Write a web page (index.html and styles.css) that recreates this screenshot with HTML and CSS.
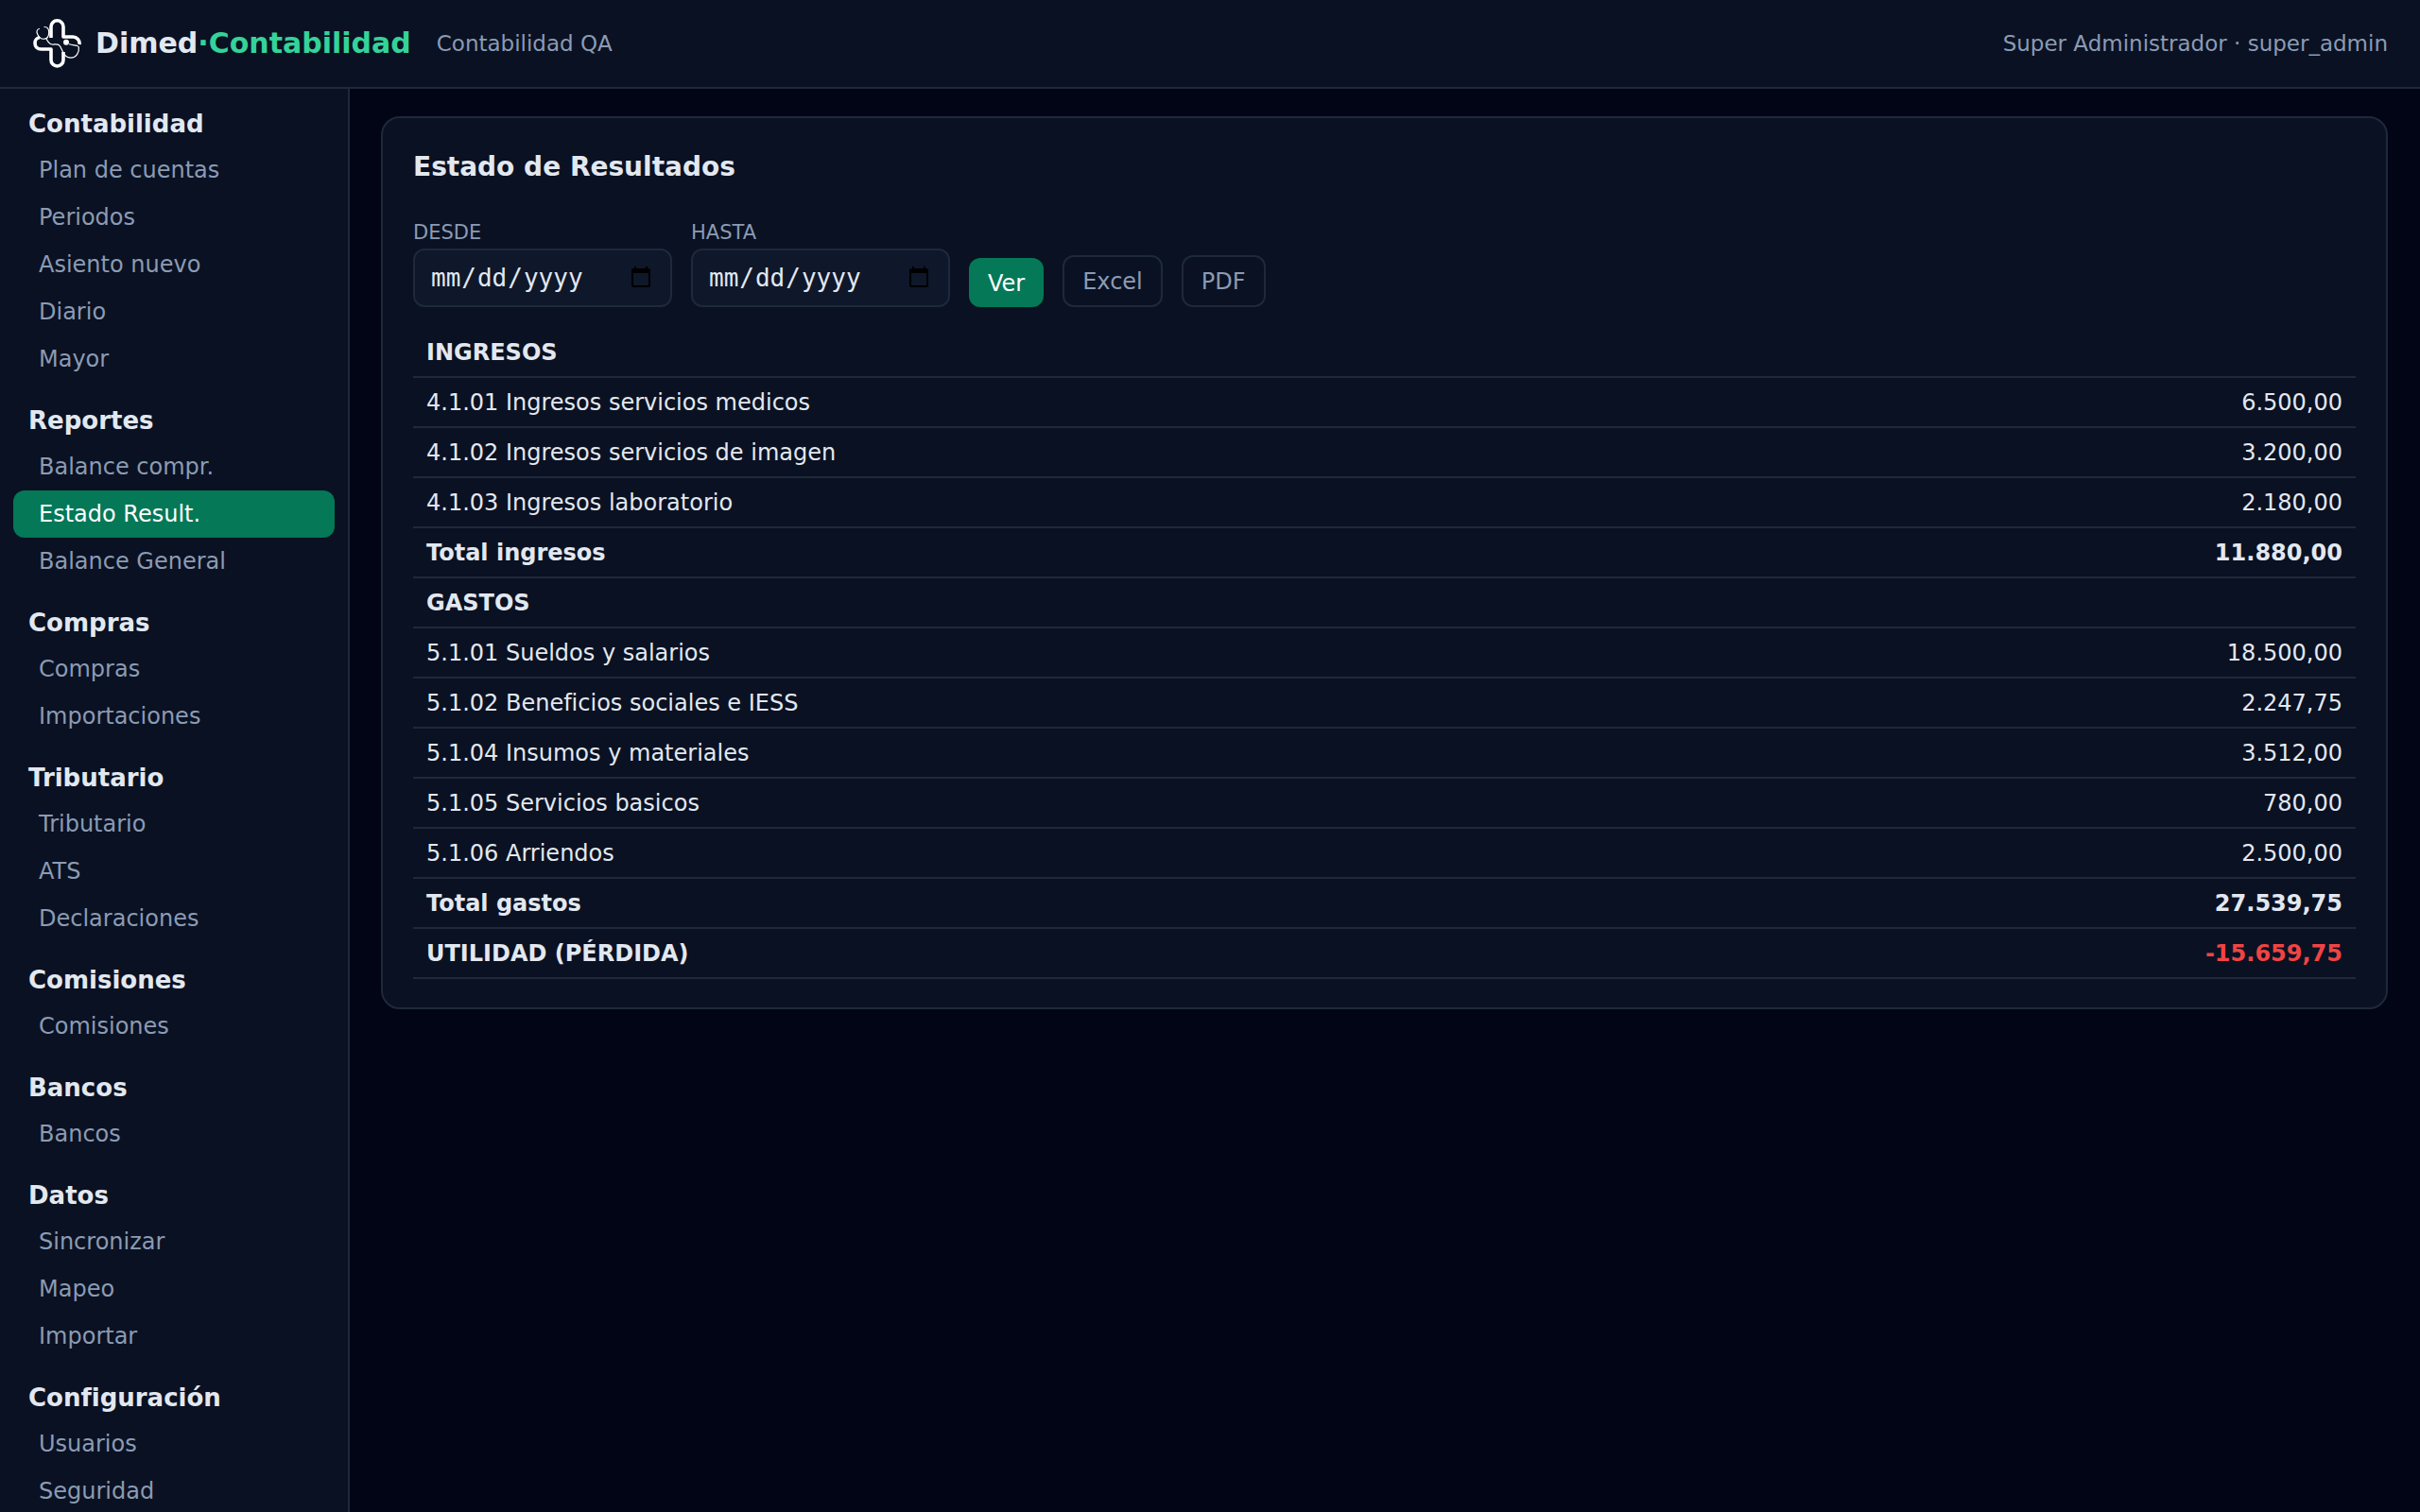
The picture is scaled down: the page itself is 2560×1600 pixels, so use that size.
FILE: index.html
```html
<!DOCTYPE html>
<html lang="es">
<head>
<meta charset="UTF-8">
<meta name="viewport" content="width=device-width, initial-scale=1">
<title>Estado de Resultados - Dimed·Contabilidad</title>
<link rel="stylesheet" href="styles.css">
</head>
<body>
<header class="topbar">
  <svg class="logo" viewBox="0 0 52 52" fill="none" stroke="#fff" stroke-linecap="round" stroke-linejoin="round" aria-hidden="true">
    <path stroke-width="3.6" stroke-linecap="butt" d="M20 20V8.300a6.500 6.500 0 0 1 13 0V19H43a7 7 0 0 1 7 8"/>
    <path stroke-width="3.6" stroke-linecap="butt" d="M8 19.800C5 20 3 22.500 3 25.500c0 4 2.500 6.500 6.500 6.500H20v11.500a6.500 6.500 0 0 0 13 0V35"/>
    <path stroke-width="1.200" d="M7.500 10.500C4.500 11 4.500 14 5.800 16.500 7.500 20 10 21.600 13 21.200c3.500-.5 4.700-4 4.700-7 0-3.500-1.200-5.700-4.700-5.700"/>
    <path stroke-width="1.200" d="M15 21c1.500 3 3 5.500 6 6 2.500.4 5-1 7.500.8 3.500 2.500 3.500 13.400 12.500 13.400 6 0 9-6.500 8.300-11.200-.6-3-6-1.500-10-3.200"/>
    <circle cx="36" cy="24.800" r="3" fill="#fff" stroke="none"/>
  </svg>
  <div class="brand">Dimed<span class="brand-accent">·Contabilidad</span></div>
  <div class="company">Contabilidad QA</div>
  <div class="user">Super Administrador · super_admin</div>
</header>

<div class="layout">
  <nav class="sidebar">
    <div class="group">
      <h2>Contabilidad</h2>
      <a href="#">Plan de cuentas</a>
      <a href="#">Periodos</a>
      <a href="#">Asiento nuevo</a>
      <a href="#">Diario</a>
      <a href="#">Mayor</a>
    </div>
    <div class="group">
      <h2>Reportes</h2>
      <a href="#">Balance compr.</a>
      <a href="#" class="active">Estado Result.</a>
      <a href="#">Balance General</a>
    </div>
    <div class="group">
      <h2>Compras</h2>
      <a href="#">Compras</a>
      <a href="#">Importaciones</a>
    </div>
    <div class="group">
      <h2>Tributario</h2>
      <a href="#">Tributario</a>
      <a href="#">ATS</a>
      <a href="#">Declaraciones</a>
    </div>
    <div class="group">
      <h2>Comisiones</h2>
      <a href="#">Comisiones</a>
    </div>
    <div class="group">
      <h2>Bancos</h2>
      <a href="#">Bancos</a>
    </div>
    <div class="group">
      <h2>Datos</h2>
      <a href="#">Sincronizar</a>
      <a href="#">Mapeo</a>
      <a href="#">Importar</a>
    </div>
    <div class="group">
      <h2>Configuración</h2>
      <a href="#">Usuarios</a>
      <a href="#">Seguridad</a>
    </div>
  </nav>

  <main class="content">
    <section class="card">
      <h1>Estado de Resultados</h1>
      <form class="filters">
        <div class="field">
          <label for="desde">DESDE</label>
          <input type="date" id="desde" name="desde">
        </div>
        <div class="field">
          <label for="hasta">HASTA</label>
          <input type="date" id="hasta" name="hasta">
        </div>
        <button type="submit" class="btn">Ver</button>
        <button type="button" class="btn btn-outline">Excel</button>
        <button type="button" class="btn btn-outline">PDF</button>
      </form>
      <table class="report">
        <tbody>
          <tr class="strong"><td colspan="2">INGRESOS</td></tr>
          <tr><td>4.1.01 Ingresos servicios medicos</td><td class="num">6.500,00</td></tr>
          <tr><td>4.1.02 Ingresos servicios de imagen</td><td class="num">3.200,00</td></tr>
          <tr><td>4.1.03 Ingresos laboratorio</td><td class="num">2.180,00</td></tr>
          <tr class="strong"><td>Total ingresos</td><td class="num">11.880,00</td></tr>
          <tr class="strong"><td colspan="2">GASTOS</td></tr>
          <tr><td>5.1.01 Sueldos y salarios</td><td class="num">18.500,00</td></tr>
          <tr><td>5.1.02 Beneficios sociales e IESS</td><td class="num">2.247,75</td></tr>
          <tr><td>5.1.04 Insumos y materiales</td><td class="num">3.512,00</td></tr>
          <tr><td>5.1.05 Servicios basicos</td><td class="num">780,00</td></tr>
          <tr><td>5.1.06 Arriendos</td><td class="num">2.500,00</td></tr>
          <tr class="strong"><td>Total gastos</td><td class="num">27.539,75</td></tr>
          <tr class="strong"><td>UTILIDAD (PÉRDIDA)</td><td class="num negative">-15.659,75</td></tr>
        </tbody>
      </table>
    </section>
  </main>
</div>
</body>
</html>
```
FILE: styles.css
```css
:root {
  --bg: #020515;
  --panel: #0a1122;
  --field: #0f172a;
  --line: #1e293b;
  --text: #e2e8f0;
  --muted: #8b9bb4;
  --green: #047857;
  --accent: #34d399;
  --red: #ef4444;
}

* {
  box-sizing: border-box;
}

body {
  margin: 0;
  height: 100vh;
  display: flex;
  flex-direction: column;
  overflow: hidden;
  background: var(--bg);
  color: var(--text);
  font-family: "DejaVu Sans", sans-serif;
  font-size: 24px;
  line-height: 36px;
}

.topbar {
  display: flex;
  align-items: center;
  flex-shrink: 0;
  height: 94px;
  padding: 0 34px;
  background: var(--panel);
  border-bottom: 2px solid var(--line);
}

.logo {
  width: 52px;
  height: 52px;
  margin-right: 15px;
}

.brand {
  font-size: 30px;
  font-weight: bold;
}

.brand-accent {
  color: var(--accent);
}

.company,
.user {
  color: var(--muted);
  font-size: 23px;
}

.company {
  margin-left: 27px;
}

.user {
  margin-left: auto;
}

.layout {
  display: flex;
  flex: 1;
  min-height: 0;
}

.sidebar {
  width: 370px;
  flex-shrink: 0;
  padding: 15px 14px;
  background: var(--panel);
  border-right: 2px solid var(--line);
  overflow: hidden;
}

.group {
  margin-bottom: 18px;
}

.group h2 {
  margin: 0;
  padding: 0 16px 2px;
  font-size: 26px;
  line-height: 44px;
}

.group a {
  display: block;
  padding: 7px 27px;
  border-radius: 12px;
  color: var(--muted);
  text-decoration: none;
}

.group a.active {
  background: var(--green);
  color: #fff;
}

.content {
  flex: 1;
  padding: 29px 34px 29px 33px;
}

.card {
  padding: 30px 32px;
  background: var(--panel);
  border: 2px solid var(--line);
  border-radius: 20px;
}

.card h1 {
  margin: 0 0 30px;
  font-size: 28px;
  line-height: 44px;
}

.filters {
  display: flex;
  align-items: flex-end;
  gap: 20px;
  margin-bottom: 22px;
}

.field {
  display: flex;
  flex-direction: column;
}

.field label {
  color: var(--muted);
  font-size: 21px;
  line-height: 34px;
}

.field input {
  width: 274px;
  height: 62px;
  padding: 12px 16px;
  background: var(--field);
  border: 2px solid var(--line);
  border-radius: 12px;
  color: var(--text);
  font-family: "DejaVu Sans Mono", monospace;
  font-size: 26px;
}

.btn {
  padding: 13px 20px 11px;
  border: 0;
  border-radius: 12px;
  background: var(--green);
  color: #fff;
  font-family: inherit;
  font-size: 24px;
  line-height: 28px;
}

.btn-outline {
  padding: 12px 19px 11px;
  background: transparent;
  border: 2px solid var(--line);
  color: var(--muted);
}

.report {
  width: 100%;
  border-collapse: collapse;
}

.report td {
  padding: 8px 14px 7px;
  border-bottom: 2px solid var(--line);
}

.report .strong {
  font-weight: bold;
}

.report .num {
  text-align: right;
}

.report .negative {
  color: var(--red);
}
```
